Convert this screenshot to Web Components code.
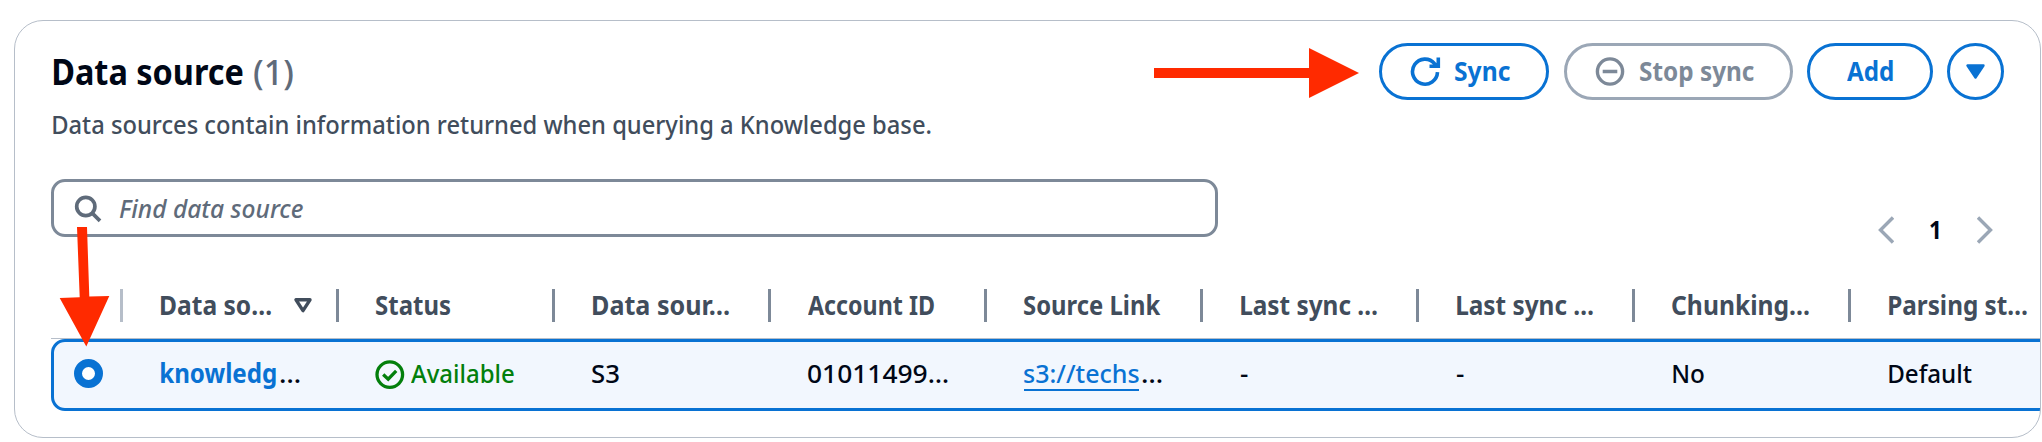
<!DOCTYPE html>
<html lang="en">
<head>
<meta charset="utf-8">
<title>Data source</title>
<style>
  html, body { margin: 0; background: #fff; overflow: hidden; }
  body { width: 2042px; height: 442px; font-family: "Noto Sans", "Open Sans", sans-serif; font-weight: 500; }
</style>
</head>
<body>
<data-source-page></data-source-page>
<script>
const define = (name, html, setup) => {
  const tpl = document.createElement('template');
  tpl.innerHTML = html;
  customElements.define(name, class extends HTMLElement {
    connectedCallback() {
      if (this.shadowRoot) return;
      this.attachShadow({ mode: 'open' }).appendChild(tpl.content.cloneNode(true));
      if (setup) setup(this, this.shadowRoot);
    }
  });
};

// Label whose visible glyphs fill exactly the number of pixels in "w".
const pen = document.createElement('canvas').getContext('2d');
define('fit-text', `<style>
    :host { display: block; flex: none; white-space: nowrap; line-height: 40px; height: 40px; }
    span { display: block; width: max-content; transform-origin: 0 0; }
  </style><span><slot></slot></span>`, (host, root) => {
  const cs = getComputedStyle(host), w = +host.getAttribute('w');
  pen.font = `${cs.fontStyle} ${cs.fontWeight} ${cs.fontSize} ${cs.fontFamily}`;
  const m = pen.measureText(host.textContent);
  const left = -m.actualBoundingBoxLeft;
  const k = w / (m.actualBoundingBoxRight - left);
  host.style.width = w + 'px';
  root.querySelector('span').style.transform = `translateX(${-left * k}px) scaleX(${k})`;
});

define('pill-button', `
  <style>
    :host { display: flex; box-sizing: border-box; height: 57px; border: 3px solid #0972d3; border-radius: 29px;
      color: #0972d3; font-size: 26px; font-weight: 700; align-items: center; flex: none; }
    :host([disabled]) { border-color: #9ba7b6; color: #7d8998; }
    ::slotted(svg) { display: block; flex: none; }
  </style><slot></slot>`);

define('card-header', `
  <style>
    :host { display: flex; justify-content: space-between; height: 140px; }
    .title { display: flex; gap: 11px; padding: 26px 0 0 38px; font-size: 35px; font-weight: 700; color: #000716; }
    .title fit-text { line-height: 50px; height: 50px; }
    .title .count { color: #5f6b7a; font-weight: 500; }
    .desc { padding: 7px 0 0 38px; font-size: 26px; color: #414d5c; }
    .actions { display: flex; padding: 22px 36px 0 0; }
    pill-button fit-text { position: relative; top: -1px; }
  </style>
  <div>
    <div class="title"><fit-text w="190">Data source</fit-text><fit-text class="count" w="39">(1)</fit-text></div>
    <div class="desc"><fit-text w="878">Data sources contain information returned when querying a Knowledge base.</fit-text></div>
  </div>
  <div class="actions">
    <pill-button style="width:170px;margin-right:15px">
      <svg style="margin:0 14px 0 28px" width="31" height="31" viewBox="0 0 31 31" fill="none" stroke="currentColor" stroke-width="3.6"><path d="M27.5 16.2A12.5 12.5 0 1 1 24.6 7.6L27 10.2M28.3 1.5V10.3H19.5"/></svg>
      <fit-text w="55">Sync</fit-text>
    </pill-button>
    <pill-button disabled style="width:229px;margin-right:14px">
      <svg style="margin:0 14.5px 0 28px" width="30" height="31" viewBox="0 0 30 31" fill="none" stroke="currentColor" stroke-width="3.4"><circle cx="15" cy="15.5" r="12.6"/><path d="M7.7 15.5H22.3"/></svg>
      <fit-text w="114">Stop sync</fit-text>
    </pill-button>
    <pill-button style="width:126px;margin-right:14px"><fit-text style="margin-left:37px" w="46">Add</fit-text></pill-button>
    <pill-button style="width:57px"><svg style="margin-left:15px" width="21" height="20" viewBox="0 0 21 20"><path d="M2.5 3.5H18.5L10.5 15.5Z" fill="currentColor" stroke="currentColor" stroke-width="2.4" stroke-linejoin="round"/></svg></pill-button>
  </div>`);

define('search-field', `
  <style>
    :host { display: flex; box-sizing: border-box; width: 1167px; height: 58px; border: 3px solid #7d8998; border-radius: 14px;
      align-items: center; font-size: 26px; font-style: italic; color: #5f6b7a; flex: none; }
    svg { display: block; margin: 0 17px 0 20px; }
  </style>
  <svg width="28" height="30" viewBox="0 0 28 30" fill="none" stroke="#5f6b7a" stroke-width="3.7"><circle cx="11.8" cy="13.5" r="9.1"/><path d="M18.2 20.2L26 27.8"/></svg>
  <fit-text w="184">Find data source</fit-text>`);

define('page-switcher', `
  <style>
    :host { display: flex; align-items: center; height: 40px; font-size: 25px; font-weight: 700; color: #000716; }
    svg { display: block; } fit-text { margin: 0 38px 0 36px; position: relative; top: -1px; }
  </style>
  <svg width="16" height="30" viewBox="0 0 16 30" fill="none" stroke="#9ba7b6" stroke-width="3.4"><path d="M15 2.5L2.5 15L15 27.5"/></svg>
  <fit-text w="9">1</fit-text>
  <svg width="16" height="30" viewBox="0 0 16 30" fill="none" stroke="#9ba7b6" stroke-width="3.4"><path d="M1 2.5L13.5 15L1 27.5"/></svg>`);

define('head-cell', `
  <style>
    :host { display: flex; box-sizing: border-box; width: 216px; height: 33px; flex: none; align-items: center;
      border-left: 3px solid #7d8998; padding-left: 37px; font-size: 26px; font-weight: 700; color: #414d5c; }
    :host([first]) { border-color: #b6bec9; }
  </style><slot></slot>`);

define('body-cell', `
  <style>
    :host { display: flex; width: 216px; flex: none; align-items: center; font-size: 26px; color: #000716; }
  </style><slot></slot>`);

define('source-table', `
  <style>
    :host { display: block; overflow-x: clip; overflow-y: visible; width: 1989px; }
    .head { display: flex; padding: 0 0 16px 69px; border-bottom: 1px solid #b6bec9; width: 2100px; }
    .row { display: flex; box-sizing: border-box; height: 72px; width: 2100px; border: 3px solid #0972d3; border-radius: 14px; background: #f2f7fe; align-items: center; }
    .radio { box-sizing: border-box; width: 29px; height: 29px; border: 8.5px solid #0972d3; border-radius: 50%; background: #fff; margin: -3px 44px 0 20px; flex: none; }
    .first { margin-left: 13px; }
    .blue { color: #0972d3; }
    .head fit-text { position: relative; top: -0.5px; }
    .row fit-text { position: relative; top: -2px; }
    .in { margin-left: 1px; }
    .link { border-bottom: 2px solid #0972d3; height: 32px; position: relative; top: -1px; }
    .link fit-text { top: -4px; }
    svg { display: block; flex: none; overflow: visible; }
  </style>
  <div class="head">
    <head-cell first><fit-text class="in" w="110">Data so…</fit-text><svg style="margin-left:22px" width="20" height="18" viewBox="0 0 20 18"><path d="M3 2.8H17L10 13.6Z" fill="none" stroke="#414d5c" stroke-width="3.4" stroke-linejoin="round"/></svg></head-cell>
    <head-cell><fit-text w="74">Status</fit-text></head-cell>
    <head-cell><fit-text class="in" w="136">Data sour…</fit-text></head-cell>
    <head-cell><fit-text w="126">Account ID</fit-text></head-cell>
    <head-cell><fit-text w="137">Source Link</fit-text></head-cell>
    <head-cell><fit-text class="in" w="136">Last sync …</fit-text></head-cell>
    <head-cell><fit-text class="in" w="136">Last sync …</fit-text></head-cell>
    <head-cell><fit-text w="137">Chunking…</fit-text></head-cell>
    <head-cell><fit-text class="in" w="138">Parsing st…</fit-text></head-cell>
  </div>
  <div class="row">
    <div class="radio"></div>
    <body-cell class="first"><fit-text class="blue in" style="font-weight:700" w="115">knowledg</fit-text><fit-text style="margin-left:4px" w="20">…</fit-text></body-cell>
    <body-cell><svg width="29" height="30" viewBox="0 0 29 30" fill="none" stroke="#037f0c" stroke-width="3.3"><circle cx="13.8" cy="14.6" r="12.8"/><path d="M7.2 14.5L12.2 19.2L20.2 10.8"/></svg><fit-text style="color:#037f0c;margin-left:6px" w="103">Available</fit-text></body-cell>
    <body-cell><fit-text w="27">S3</fit-text></body-cell>
    <body-cell><fit-text w="140">01011499…</fit-text></body-cell>
    <body-cell><div class="link"><fit-text class="blue" w="115">s3://techs</fit-text></div><fit-text style="margin-left:3px" w="20">…</fit-text></body-cell>
    <body-cell><fit-text w="8">-</fit-text></body-cell>
    <body-cell><fit-text w="8">-</fit-text></body-cell>
    <body-cell><fit-text class="in" w="31">No</fit-text></body-cell>
    <body-cell><fit-text class="in" w="83">Default</fit-text></body-cell>
  </div>`);

define('red-arrow', `
  <style>:host { display: block; position: absolute; pointer-events: none; } svg { display: block; overflow: visible; }</style>
  <svg><path fill="#ff2a00"/></svg>`, (host, root) => {
  const svg = root.querySelector('svg');
  svg.setAttribute('width', host.getAttribute('width'));
  svg.setAttribute('height', host.getAttribute('height'));
  svg.firstElementChild.setAttribute('d', host.getAttribute('shape'));
});

define('data-source-page', `
  <style>
    :host { display: block; position: relative; box-sizing: border-box; width: 2042px; height: 442px; padding: 20px 1px 4px 14px; }
    .card { box-sizing: border-box; height: 418px; border: 1px solid #b6bec9; border-radius: 29px; overflow: hidden; }
    .tools { display: flex; justify-content: space-between; box-sizing: border-box; padding: 18px 47px 0 36px; height: 128px; }
    page-switcher { margin-top: 31px; }
    source-table { margin-left: 36px; }
  </style>
  <div class="card">
    <card-header></card-header>
    <div class="tools"><search-field></search-field><page-switcher></page-switcher></div>
    <source-table></source-table>
  </div>
  <red-arrow style="left:1154px;top:48px" width="205" height="50" shape="M0 20H155V0L205 25L155 50V30H0Z"></red-arrow>
  <red-arrow style="left:60px;top:227px" width="50" height="120" shape="M17 0H27L29.3 69.5L49.3 69L26.3 119.5L-.3 71L19.7 70.3Z"></red-arrow>`);
</script>
</body>
</html>
